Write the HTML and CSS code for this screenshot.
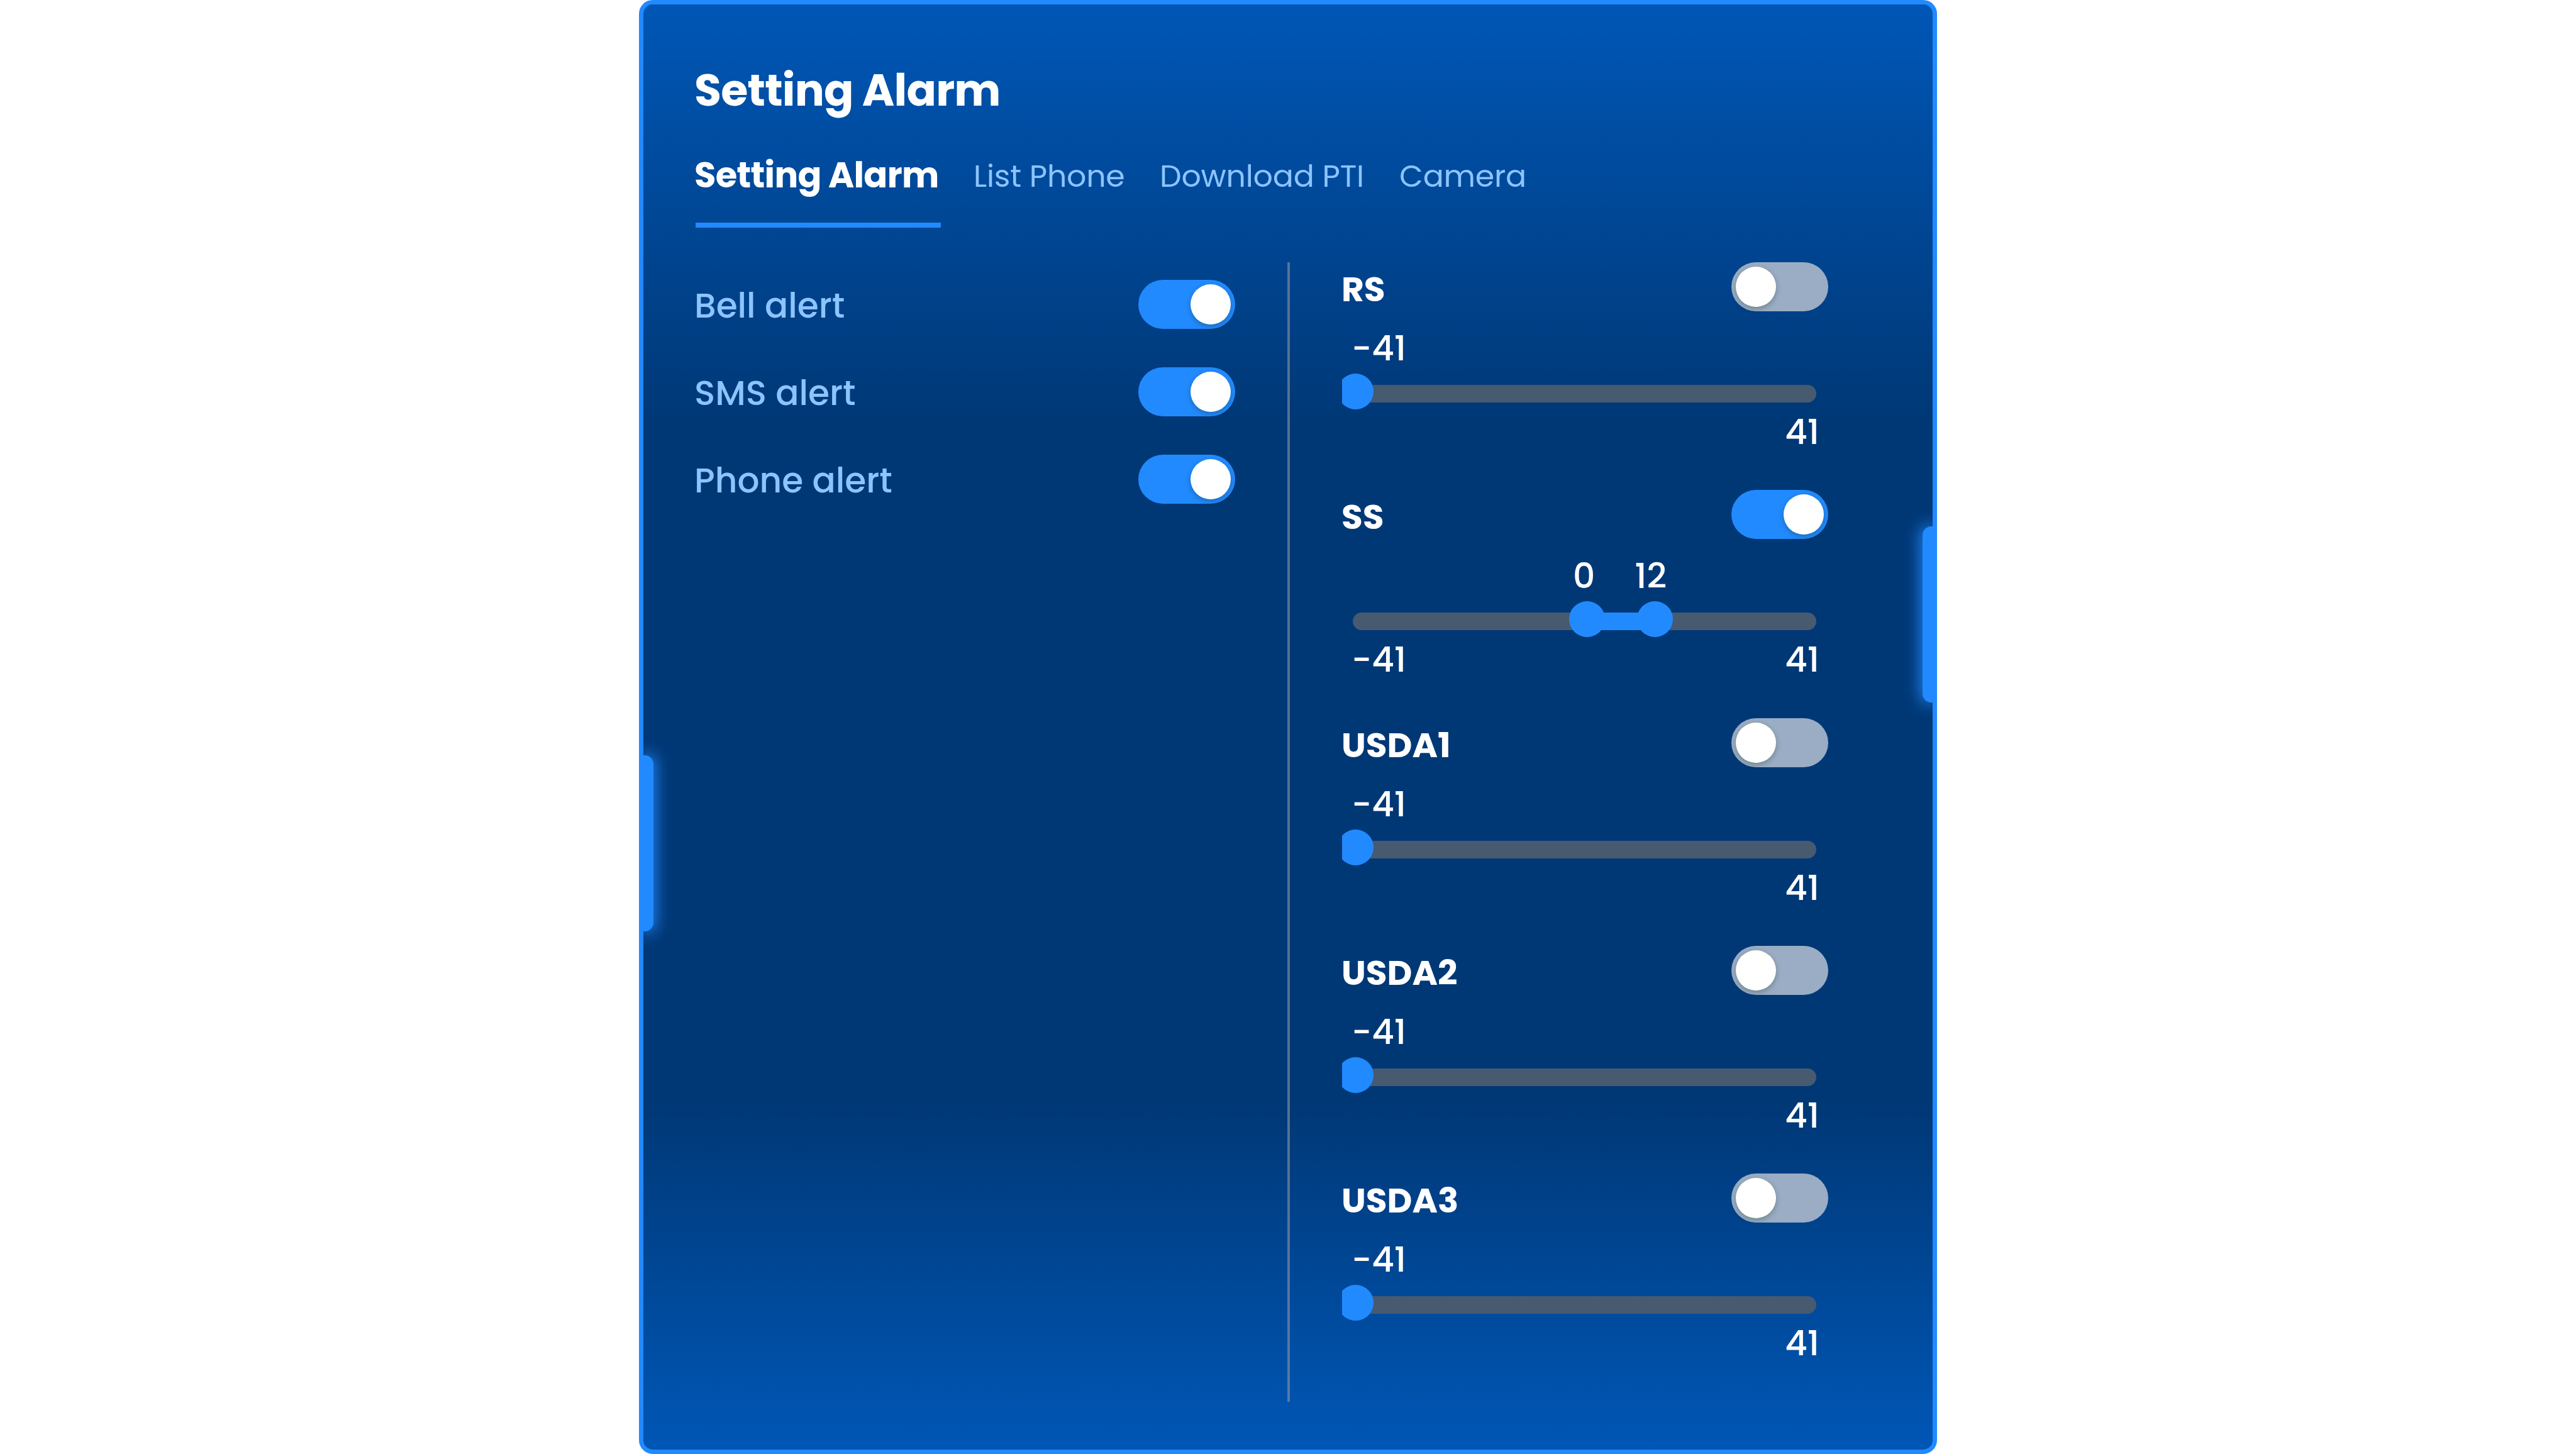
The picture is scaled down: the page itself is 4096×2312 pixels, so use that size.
FILE: index.html
```html
<!DOCTYPE html>
<html lang="en">
  <head>
    <meta charset="UTF-8" />
    <meta name="viewport" content="width=device-width, initial-scale=1.0" />
    <title>Setting Alarm</title>
    <link rel="stylesheet" href="styles.css">
  </head>
  <body>
    <div class="card">
      <span class="handle handle-left"></span>
      <span class="handle handle-right"></span>

      <h1>Setting Alarm</h1>

      <nav class="tabs">
        <a class="tab active">Setting Alarm</a>
        <a class="tab list-phone">List Phone</a>
        <a class="tab download">Download PTI</a>
        <a class="tab camera">Camera</a>
      </nav>

      <div class="content">
        <div class="alerts">
          <div class="alert-row">
            <span class="alert-name">Bell alert</span>
            <span class="switch on"></span>
          </div>
          <div class="alert-row">
            <span class="alert-name">SMS alert</span>
            <span class="switch on"></span>
          </div>
          <div class="alert-row">
            <span class="alert-name">Phone alert</span>
            <span class="switch on"></span>
          </div>
        </div>

        <div class="sensors">
          <div class="sensor">
            <div class="sensor-head"><span class="sensor-name">RS</span><span class="switch"></span></div>
            <div class="values"><span>-41</span></div>
            <div class="slider"><span class="track"></span><span class="thumb thumb-min"></span></div>
            <div class="limits"><span></span><span>41</span></div>
          </div>

          <div class="sensor">
            <div class="sensor-head"><span class="sensor-name">SS</span><span class="switch on"></span></div>
            <div class="values range-values"><span>0</span><span>12</span></div>
            <div class="slider">
              <span class="track"></span>
              <span class="range"></span>
              <span class="thumb thumb-low"></span>
              <span class="thumb thumb-high"></span>
            </div>
            <div class="limits"><span>-41</span><span>41</span></div>
          </div>

          <div class="sensor">
            <div class="sensor-head"><span class="sensor-name">USDA1</span><span class="switch"></span></div>
            <div class="values"><span>-41</span></div>
            <div class="slider"><span class="track"></span><span class="thumb thumb-min"></span></div>
            <div class="limits"><span></span><span>41</span></div>
          </div>

          <div class="sensor">
            <div class="sensor-head"><span class="sensor-name">USDA2</span><span class="switch"></span></div>
            <div class="values"><span>-41</span></div>
            <div class="slider"><span class="track"></span><span class="thumb thumb-min"></span></div>
            <div class="limits"><span></span><span>41</span></div>
          </div>

          <div class="sensor">
            <div class="sensor-head"><span class="sensor-name">USDA3</span><span class="switch"></span></div>
            <div class="values"><span>-41</span></div>
            <div class="slider"><span class="track"></span><span class="thumb thumb-min"></span></div>
            <div class="limits"><span></span><span>41</span></div>
          </div>
        </div>
      </div>
    </div>
  </body>
</html>
```
FILE: styles.css
```css
* {
  box-sizing: border-box;
}

body {
  margin: 0;
  height: 2312px;
  overflow: hidden;
  background-color: #fff;
  font-family: "Poppins", "Inter", sans-serif;
}

.card {
  position: relative;
  width: 2064px;
  height: 2312px;
  margin-left: 1016px;
  padding: 0 166px 0 83px;
  border: 7px solid #228aff;
  border-radius: 22px;
  background: linear-gradient(#0057b7, #003876 29%, #003876 76%, #0057b7);
  background-origin: border-box;
  overflow: hidden;
}

/* glowing grips on the card edges */
.handle {
  position: absolute;
  width: 16px;
  height: 280px;
  background-color: #228aff;
  box-shadow: 0 0 24px 3px #228aff;
}

.handle-left {
  left: 0;
  top: 1194px;
  border-radius: 0 14px 14px 0;
}

.handle-right {
  right: 0;
  top: 830px;
  border-radius: 14px 0 0 14px;
}

h1 {
  margin: 0 0 0 -2px;
  padding-top: 86px;
  font-size: 70px;
  line-height: 101px;
  font-weight: 700;
  letter-spacing: -0.8px;
  color: #fff;
}

.tabs {
  display: flex;
  height: 168px;
  padding-top: 44px;
}

.tab {
  height: 124px;
  line-height: 84px;
  font-size: 49px;
  letter-spacing: -0.2px;
  color: #8cc4ff;
  white-space: nowrap;
}

.tab.active {
  width: 390px;
  margin-right: 52px;
  border-bottom: 8px solid #228aff;
  line-height: 82px;
  font-size: 56px;
  font-weight: 700;
  letter-spacing: -0.7px;
  text-indent: -2px;
  color: #fff;
}

.list-phone {
  width: 296px;
}

.download {
  width: 381px;
}

.content {
  display: flex;
  margin-top: 55px;
}

.alerts {
  width: 945px;
  height: 1812px;
  padding: 28px 83px 0 0;
  border-right: 4px solid rgba(140, 150, 165, 0.6);
}

.alert-row {
  display: flex;
  justify-content: space-between;
  align-items: center;
  height: 78px;
  margin-bottom: 61px;
}

.alert-name {
  margin-left: -2px;
  padding-top: 2px;
  font-size: 55px;
  font-weight: 500;
  color: #8cc4ff;
}

.switch {
  width: 154px;
  height: 78px;
  padding: 7px;
  border-radius: 39px;
  background-color: #9aadc4;
}

.switch::before {
  content: "";
  display: block;
  width: 64px;
  height: 64px;
  border-radius: 50%;
  background-color: #fff;
  box-shadow: 0 3px 8px rgba(0, 35, 11, 0.3);
}

.switch.on {
  background-color: #228aff;
}

.switch.on::before {
  margin-left: 76px;
}

.sensors {
  flex: 1;
  padding-left: 83px;
}

.sensor {
  height: 362.3px;
  font-size: 55px;
  color: #fff;
}

.sensor-head {
  display: flex;
  justify-content: space-between;
  height: 78px;
}

.sensor-name {
  margin-left: -1px;
  padding-top: 3px;
  line-height: 80px;
  font-weight: 700;
}

.values {
  height: 99px;
  padding: 20px 0 0 15px;
  line-height: 78px;
  font-weight: 500;
}

.range-values {
  display: flex;
  padding-left: 367px;
}

.range-values span + span {
  margin-left: 63px;
}

.slider {
  position: relative;
  height: 57px;
  overflow: hidden;
}

.track,
.range,
.thumb {
  position: absolute;
}

.track {
  left: 17px;
  top: 18px;
  width: 737px;
  height: 28px;
  border-radius: 14px;
  background-color: #475a70;
}

.range {
  left: 389px;
  top: 18px;
  width: 109px;
  height: 28px;
  background-color: #228aff;
}

.thumb {
  top: 0;
  width: 57px;
  height: 57px;
  border-radius: 50%;
  background-color: #228aff;
}

.thumb-min {
  left: -7px;
}

.thumb-low {
  left: 361px;
}

.thumb-high {
  left: 469px;
}

.limits {
  display: flex;
  justify-content: space-between;
  padding: 0 14px 0 15px;
  line-height: 72px;
  font-weight: 500;
}
```
